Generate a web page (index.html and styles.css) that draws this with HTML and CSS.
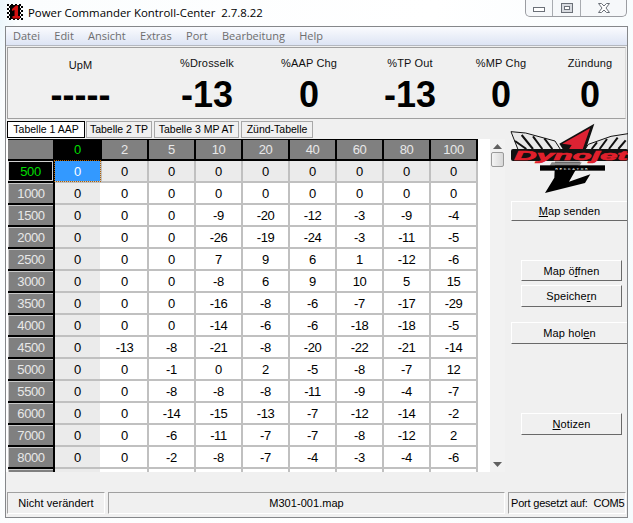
FILE: index.html
```html
<!DOCTYPE html>
<html lang="de">
<head>
  <meta charset="UTF-8">
  <title>Power Commander Kontroll-Center</title>
  <link rel="stylesheet" href="styles.css">
</head>
<body>
  <div class="titlebar">
    <svg class="app-icon" width="16" height="16" viewBox="0 0 16 16">
      <defs>
        <pattern id="check" width="4" height="4" patternUnits="userSpaceOnUse">
          <rect width="4" height="4" fill="#fff"/>
          <rect width="2" height="2" fill="#000"/>
          <rect x="2" y="2" width="2" height="2" fill="#000"/>
        </pattern>
      </defs>
      <rect width="16" height="16" fill="url(#check)"/>
      <rect x="3" y="1" width="10" height="14" fill="#000"/>
      <path d="M5 5 L9 1.500 H11 V12 H13 V14.500 H5.500 V12 H7.500 V6 L5 7 Z" fill="#d01010"/>
    </svg>
    <span class="title">Power Commander Kontroll-Center&nbsp; 2.7.8.22</span>
    <div class="controls">
      <div class="ctl ctl-min"><svg width="14" height="7" viewBox="0 0 14 7"><rect x="1.500" y="1.500" width="11" height="4" fill="#fff" stroke="#6b7078"/></svg></div>
      <div class="ctl ctl-max"><svg width="14" height="11" viewBox="0 0 14 11"><rect x="1.500" y="0.500" width="11" height="9" fill="#d8dbe0" stroke="#6b7078"/><rect x="4.500" y="3.500" width="5" height="3" fill="#fff" stroke="#6b7078"/></svg></div>
      <div class="ctl ctl-close"><svg width="14" height="11" viewBox="0 0 14 11"><path d="M1.500 0.500 H4.500 L7 3 L9.500 0.500 H12.500 L9 5 L12.500 9.500 H9.500 L7 7 L4.500 9.500 H1.500 L5 5 Z" fill="#fff" stroke="#6b7078"/></svg></div>
    </div>
  </div>

  <div class="window">
    <div class="menu">
      <span>Datei</span><span>Edit</span><span>Ansicht</span><span>Extras</span><span>Port</span><span>Bearbeitung</span><span>Help</span>
    </div>

    <div class="gauges">
      <div class="gauge gauge-rpm"><div class="gauge-label">UpM</div><div class="gauge-value">-----</div></div>
      <div class="gauge"><div class="gauge-label">%Drosselk</div><div class="gauge-value">-13</div></div>
      <div class="gauge"><div class="gauge-label">%AAP Chg</div><div class="gauge-value">0</div></div>
      <div class="gauge"><div class="gauge-label">%TP Out</div><div class="gauge-value">-13</div></div>
      <div class="gauge"><div class="gauge-label">%MP Chg</div><div class="gauge-value">0</div></div>
      <div class="gauge"><div class="gauge-label">Zündung</div><div class="gauge-value">0</div></div>
    </div>

    <div class="main">
      <div class="left">
        <div class="tabs">
          <div class="tab tab-active">Tabelle 1 AAP</div>
          <div class="tab tab-2">Tabelle 2 TP</div>
          <div class="tab tab-3">Tabelle 3 MP AT</div>
          <div class="tab tab-4">Zünd-Tabelle</div>
        </div>
        <div class="table-row">
          <div class="table-wrap">
            <div class="map">
              <div class="hd"></div><div class="hd hd-on">0</div><div class="hd">2</div><div class="hd">5</div><div class="hd">10</div><div class="hd">20</div><div class="hd">40</div><div class="hd">60</div><div class="hd">80</div><div class="hd">100</div>
              <div class="rh rh-on">500</div><div class="c sel">0</div><div class="c sh">0</div><div class="c sh">0</div><div class="c sh">0</div><div class="c sh">0</div><div class="c sh">0</div><div class="c sh">0</div><div class="c sh">0</div><div class="c sh">0</div>
              <div class="rh">1000</div><div class="c c0">0</div><div class="c">0</div><div class="c">0</div><div class="c">0</div><div class="c">0</div><div class="c">0</div><div class="c">0</div><div class="c">0</div><div class="c">0</div>
              <div class="rh">1500</div><div class="c c0">0</div><div class="c">0</div><div class="c">0</div><div class="c">-9</div><div class="c">-20</div><div class="c">-12</div><div class="c">-3</div><div class="c">-9</div><div class="c">-4</div>
              <div class="rh">2000</div><div class="c c0">0</div><div class="c">0</div><div class="c">0</div><div class="c">-26</div><div class="c">-19</div><div class="c">-24</div><div class="c">-3</div><div class="c">-11</div><div class="c">-5</div>
              <div class="rh">2500</div><div class="c c0">0</div><div class="c">0</div><div class="c">0</div><div class="c">7</div><div class="c">9</div><div class="c">6</div><div class="c">1</div><div class="c">-12</div><div class="c">-6</div>
              <div class="rh">3000</div><div class="c c0">0</div><div class="c">0</div><div class="c">0</div><div class="c">-8</div><div class="c">6</div><div class="c">9</div><div class="c">10</div><div class="c">5</div><div class="c">15</div>
              <div class="rh">3500</div><div class="c c0">0</div><div class="c">0</div><div class="c">0</div><div class="c">-16</div><div class="c">-8</div><div class="c">-6</div><div class="c">-7</div><div class="c">-17</div><div class="c">-29</div>
              <div class="rh">4000</div><div class="c c0">0</div><div class="c">0</div><div class="c">0</div><div class="c">-14</div><div class="c">-6</div><div class="c">-6</div><div class="c">-18</div><div class="c">-18</div><div class="c">-5</div>
              <div class="rh">4500</div><div class="c c0">0</div><div class="c">-13</div><div class="c">-8</div><div class="c">-21</div><div class="c">-8</div><div class="c">-20</div><div class="c">-22</div><div class="c">-21</div><div class="c">-14</div>
              <div class="rh">5000</div><div class="c c0">0</div><div class="c">0</div><div class="c">-1</div><div class="c">0</div><div class="c">2</div><div class="c">-5</div><div class="c">-8</div><div class="c">-7</div><div class="c">12</div>
              <div class="rh">5500</div><div class="c c0">0</div><div class="c">0</div><div class="c">-8</div><div class="c">-8</div><div class="c">-8</div><div class="c">-11</div><div class="c">-9</div><div class="c">-4</div><div class="c">-7</div>
              <div class="rh">6000</div><div class="c c0">0</div><div class="c">0</div><div class="c">-14</div><div class="c">-15</div><div class="c">-13</div><div class="c">-7</div><div class="c">-12</div><div class="c">-14</div><div class="c">-2</div>
              <div class="rh">7000</div><div class="c c0">0</div><div class="c">0</div><div class="c">-6</div><div class="c">-11</div><div class="c">-7</div><div class="c">-7</div><div class="c">-8</div><div class="c">-12</div><div class="c">2</div>
              <div class="rh">8000</div><div class="c c0">0</div><div class="c">0</div><div class="c">-2</div><div class="c">-8</div><div class="c">-7</div><div class="c">-4</div><div class="c">-3</div><div class="c">-4</div><div class="c">-6</div>
              <div class="rh"></div><div class="c c0"></div><div class="c"></div><div class="c"></div><div class="c"></div><div class="c"></div><div class="c"></div><div class="c"></div><div class="c"></div><div class="c"></div>
            </div>
          </div>
          <div class="scrollbar">
            <svg class="arrow" width="9" height="5" viewBox="0 0 9 5"><path d="M4.500 0 L9 5 H0 Z" fill="#606060"/></svg>
            <div class="thumb"></div>
            <svg class="arrow arrow-down" width="9" height="5" viewBox="0 0 9 5"><path d="M0 0 H9 L4.500 5 Z" fill="#606060"/></svg>
          </div>
        </div>
      </div>

      <div class="side">
        <svg class="logo" width="123" height="78" viewBox="0 0 369 234">
          <!-- wings -->
          <path d="M18 32 L62 36 L150 60 L168 88 L40 88 Z" fill="#e8e8e8" stroke="#111" stroke-width="3"/>
          <path d="M50 42 L84 84 M84 46 L112 84 M118 52 L142 84 M30 60 L64 84" stroke="#111" stroke-width="6"/>
          <path d="M369 38 L318 46 L250 70 L238 88 L369 88 Z" fill="#e8e8e8" stroke="#111" stroke-width="3"/>
          <path d="M338 50 L312 84 M306 54 L284 84 M276 64 L260 84 M362 58 L340 84" stroke="#111" stroke-width="6"/>
          <!-- the 1 -->
          <path d="M163 68 L268 8 L240 92 L178 92 Z" fill="#111"/>
          <path d="M172 68 L255 22 L232 88 L190 88 L200 72 Z" fill="#dd2233"/>
          <path d="M150 122 H226 L192 182 L256 160 L240 186 L120 216 L148 170 Z" fill="#000"/>
          <path d="M140 124 H230 L224 134 H134 Z" fill="#8a8a8a"/>
          <!-- name band -->
          <rect x="18" y="84" width="351" height="36" rx="6" fill="#111"/>
          <text class="logo-name" x="28" y="116" textLength="340" lengthAdjust="spacingAndGlyphs">Dynojet</text>
          <rect x="105" y="133" width="195" height="16" fill="#000"/>
          <text class="logo-sub" x="202" y="146" text-anchor="middle">RECCATOR</text>
        </svg>
        <button class="btn btn-wide btn-send"><u>M</u>ap senden</button>
        <button class="btn btn-open">Map ö<u>f</u>fnen</button>
        <button class="btn btn-save">Speiche<u>r</u>n</button>
        <button class="btn btn-wide btn-get">Map hol<u>e</u>n</button>
        <button class="btn btn-notes"><u>N</u>otizen</button>
      </div>
    </div>

    <div class="status">
      <div class="status-cell status-state">Nicht verändert</div>
      <div class="status-cell status-file">M301-001.map</div>
      <div class="status-cell status-port">Port gesetzt auf:&nbsp; COM5</div>
    </div>
  </div>
</body>
</html>
```

FILE: styles.css
```css
* { box-sizing:border-box; margin:0; padding:0; }
html, body { height:100%; overflow:hidden; }
body {
  width:633px; height:523px;
  background:linear-gradient(100deg,#eaf5fb 0,#fbfdfe 3%,#ffffff 60%,#f6fbfd 100%);
  font-family:"Liberation Sans",Arial,sans-serif; font-size:11px; color:#000;
}

/* title bar */
.titlebar { display:flex; height:26px; padding-left:7px; }
.app-icon { margin-top:4px; }
.title { margin:4px 0 0 5px; font-family:"Open Sans",sans-serif; font-size:11.4px; line-height:17px; color:#000; white-space:nowrap; }
.controls { display:flex; height:17px; margin:0 6px 0 auto; border:1px solid #9b9da2; border-top:none; border-radius:0 0 5px 5px; background:#f6f8fa; }
.ctl { display:flex; align-items:flex-start; justify-content:center; padding-top:3px; border-right:1px solid #a8abb0; }
.ctl:last-child { border-right:none; }
.ctl-min { width:27px; padding-top:6px; }
.ctl-max { width:28px; }
.ctl-close { width:45px; }

/* window */
.window { width:623px; height:492px; margin-left:5px; border:1px solid #85878a; background:#f0f0f0; }

.menu {
  display:flex; gap:14.300px; height:19px; padding:0 0 0 7px;
  background:linear-gradient(#fafbfe,#dde4f4);
  border-bottom:1px solid #b4b8c0;
  font-family:"Open Sans",sans-serif; font-size:11px; line-height:18px; color:#6d6d6d;
}

.gauges {
  display:grid; grid-template-columns:159px 78px 126px 76px 106px 72px;
  height:72px; margin:1px 1px 0 1px; padding-left:1px;
  border:1px solid #a0a0a0; border-right-color:#d8d8d8;
}
.gauge { text-align:center; }
.gauge-rpm { padding-right:16px; }
.gauge-label { margin-top:8px; font-size:11px; line-height:14px; letter-spacing:.15px; color:#111; }
.gauge-rpm .gauge-label { margin-top:10px; }
.gauge-value { margin-top:5px; font-size:36px; font-weight:bold; line-height:40px; }
.gauge-rpm .gauge-value { margin-top:3px; }

/* tabs and table */
.main { display:flex; height:353px; }
.left { width:499px; }
.tabs { display:flex; gap:1px; height:17px; margin:2px 0 1px 1px; }
.tab {
  height:17px; background:#f0f0f0; border:1px solid #a8a8a8;
  font-size:10.500px; line-height:15px; text-align:center; white-space:nowrap;
}
.tab-active { background:#fff; border-color:#000; width:78px; }
.tab-2 { width:66px; }
.tab-3 { width:85px; margin-left:1px; }
.tab-4 { width:72px; margin-left:1px; }
.table-row { display:flex; height:333px; }
.table-wrap { width:484px; height:333px; padding-left:2px; overflow:hidden; background:#fff; }
.map {
  display:grid; grid-template-columns:repeat(10,45px); grid-auto-rows:20px; gap:2px;
  width:470px; padding-right:2px; background:#c0c0c0;
  font-size:13px; letter-spacing:-.4px; line-height:21px; text-align:center;
}
.hd, .rh { background:#808080; color:#e8e8e8; box-shadow:0 2px 0 #000, 2px 0 0 #000, 2px 2px 0 #000; }
.hd { height:20px; border-top:1px solid #000; line-height:20px; }
.rh { border-top:1px solid #c8c8c8; border-left:1px solid #c8c8c8; line-height:20px; }
.hd-on { background:#000; color:#00dd00; }
.rh-on { background:#000; color:#00dd00; border:1px solid #d0d0d0; line-height:19px; }
.c { background:#fff; color:#000; }
.c0 { background:#ebebeb; box-shadow:2px 0 0 #fff; }
.sh { background:#ebebeb; }
.sel { background:#3399ff; color:#fff; outline:1px dotted #b06000; outline-offset:0; }

.scrollbar { display:flex; flex-direction:column; align-items:center; width:15px; height:333px; background:#f2f2f2; }
.arrow { margin-top:5px; flex:none; }
.arrow-down { margin-top:auto; margin-bottom:5px; }
.thumb { width:13px; height:15px; margin-top:3px; border:1px solid #9a9a9a; border-radius:2px; background:linear-gradient(90deg,#f4f4f4,#d8d8d8); }

/* right column */
.side { display:flex; flex-direction:column; align-items:flex-end; width:122px; height:353px; }
.logo { flex:none; margin-top:2px; align-self:flex-start; overflow:hidden; }
.logo-name { font-family:"Liberation Sans",Arial,sans-serif; font-size:40px; font-weight:bold; font-style:italic; fill:#e0202c; stroke:#e0202c; stroke-width:2px; }
.logo-sub { font-family:"Liberation Mono",monospace; font-size:13px; letter-spacing:5px; fill:#fff; }

.btn {
  flex:none; display:block; width:101px; height:22px; margin-right:5px;
  background:#f0f0f0; border:1px solid; border-color:#fff #696969 #696969 #fff;
  font-family:"Liberation Sans",Arial,sans-serif; font-size:11px; letter-spacing:.1px; color:#000;
}
.btn-wide { width:116px; margin-right:0; border-right:none; }
.btn-send { height:20px; margin-top:2px; }
.btn-open { height:21px; margin-top:39px; }
.btn-save { margin-top:4px; }
.btn-get { margin-top:15px; }
.btn-notes { margin-top:69px; }

/* status bar */
.status { display:flex; gap:3px; height:22px; margin:20px 1px 0 1px; }
.status-cell { padding:0 4px; border:1px solid; border-color:#a0a0a0 #fff #fff #a0a0a0; line-height:21px; white-space:nowrap; letter-spacing:.05px; }
.status-state { width:98px; text-align:center; }
.status-file { width:397px; text-align:center; }
.status-port { width:118px; padding:0 0 0 2px; letter-spacing:-.2px; }
```
